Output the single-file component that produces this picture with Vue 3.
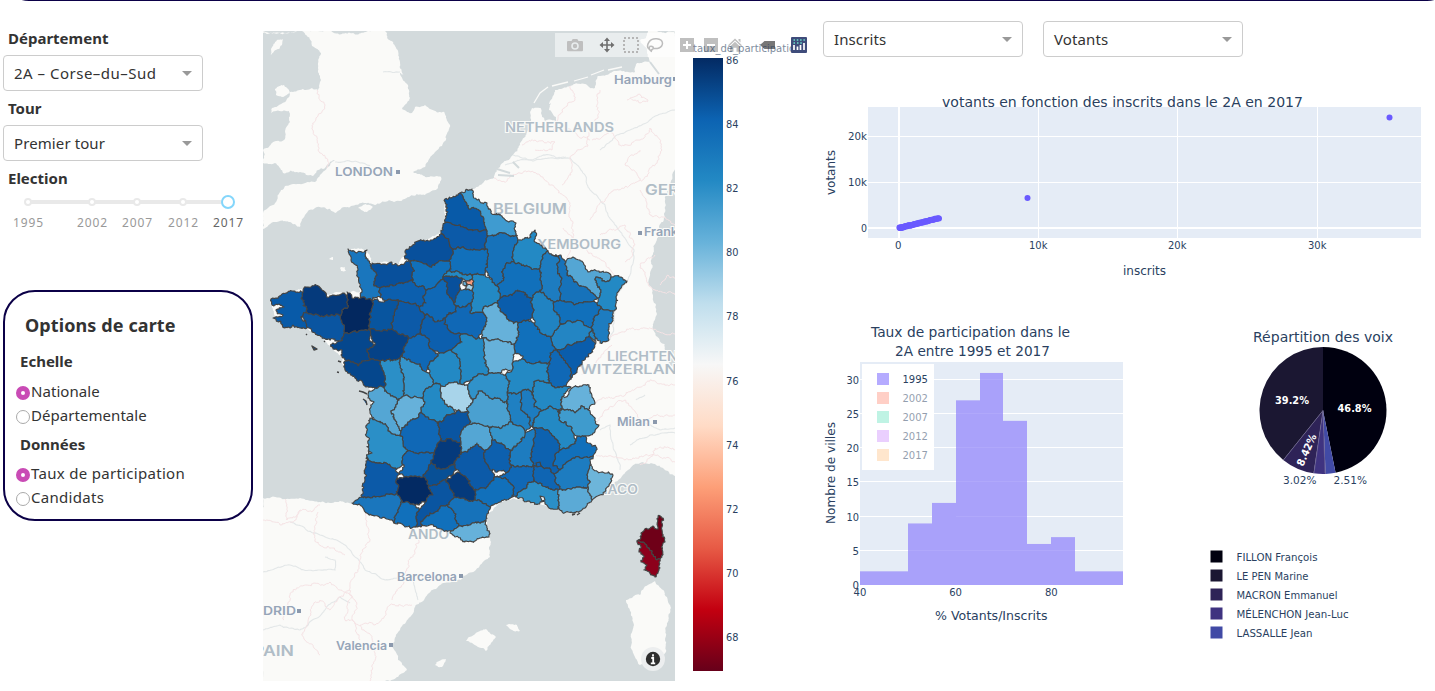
<script setup>
import { ref } from 'vue'

const years = [
  { label: '1995', x: 28 },
  { label: '2002', x: 92 },
  { label: '2007', x: 137 },
  { label: '2012', x: 183 },
  { label: '2017', x: 228 }
]
const scale = ref('Nationale')
const data = ref('Taux de participation')

// Département outlines: fill colour, then x,y pairs in map space
const departments = [
  ['#085aa8', '445,199 460,193 468,207 477,209 484,219 485,226 487,231 478,231 467,229 460,225 450,223 445,222'],
  ['#3f9bd0', '460,193 472,189 474,198 481,203 487,203 492,214 502,216 507,221 516,223 516,235 504,233 488,236 487,231 485,226 484,219 477,209 468,207'],
  ['#0c5aa8', '445,222 450,223 460,225 467,229 478,231 487,231 488,236 486,249 470,250 452,249 449,242 441,234 443,230'],
  ['#1672ba', '488,236 504,233 516,235 518,240 514,249 514,262 508,263 503,270 502,281 497,286 492,279 485,270 488,256 486,249'],
  ['#2389c4', '518,240 524,239 531,237 532,232 535,230 536,236 535,242 540,245 548,251 543,255 541,264 539,269 527,266 514,262 514,249'],
  ['#1d7cc0', '548,251 552,255 559,258 558,270 562,278 560,292 560,300 553,303 547,298 541,290 540,280 539,269 541,264 543,255'],
  ['#1672ba', '552,255 561,255 566,261 567,275 578,284 588,289 598,298 590,302 583,303 571,302 560,300 560,292 562,278 558,270 559,258'],
  ['#54a6d4', '566,261 573,257 580,260 588,272 597,271 606,272 611,277 610,280 602,281 596,277 597,285 601,290 598,298 588,289 578,284 567,275'],
  ['#2389c4', '611,277 620,277 627,281 617,295 613,311 608,310 601,307 597,303 598,298 601,290 597,285 596,277 602,281 610,280'],
  ['#1d7cc0', '601,307 608,310 613,311 612,322 609,332 609,340 600,343 595,337 591,328 594,320'],
  ['#1170bb', '560,300 571,302 583,303 590,302 597,303 601,307 594,320 591,328 583,322 570,321 562,324 559,316 553,303'],
  ['#2083c2', '591,328 595,337 596,342 588,337'],
  ['#2385c3', '562,324 570,321 583,322 591,328 588,337 579,342 565,348 557,350 552,345 552,336 556,330'],
  ['#0a5dac', '588,337 596,343 592,350 582,361 576,373 571,379 569,367 560,355 557,350 565,348 579,342'],
  ['#1068b6', '550,353 557,350 560,355 569,367 571,379 566,386 555,388 549,383 548,373 549,362'],
  ['#2389c4', '535,381 549,383 555,388 566,386 571,387 566,392 562,397 560,413 550,406 541,411 534,407 533,395'],
  ['#66b1da', '562,397 568,395 572,388 580,386 589,385 590,393 595,403 588,410 581,406 575,413 563,409 560,413'],
  ['#3f9bcd', '560,413 563,409 575,413 581,406 588,410 595,418 599,425 594,433 583,436 574,435 572,428 566,422 559,420'],
  ['#2389c4', '534,420 541,411 550,406 560,413 559,420 566,422 572,428 574,435 575,442 569,448 560,450 557,440 549,431 540,428 534,428'],
  ['#1170bb', '560,450 569,448 575,442 577,436 586,436 588,443 596,447 593,456 580,458 567,462 560,470 553,466 555,457'],
  ['#0d62b0', '534,428 540,428 549,431 557,440 560,450 555,457 553,466 560,470 554,474 546,468 533,466 531,455 533,440'],
  ['#1d7cc0', '534,428 533,440 531,455 533,466 520,467 511,465 510,453 517,445 522,438 526,432'],
  ['#1f80c2', '507,392 520,392 521,410 530,418 531,426 525,432 519,426 511,422 508,411'],
  ['#1d7cc0', '520,392 528,389 533,395 534,407 541,411 534,420 534,428 530,426 530,418 521,410'],
  ['#2389c4', '513,362 523,359 530,363 540,361 549,362 548,373 549,383 535,381 533,395 528,389 520,392 507,392 510,381 505,375 512,370'],
  ['#1170bb', '518,323 527,320 535,325 541,333 552,336 552,345 557,350 550,353 549,362 540,361 530,363 523,359 515,353 514,344 518,333'],
  ['#2083c2', '531,298 541,290 547,298 553,303 559,316 562,324 556,330 552,336 541,333 535,325 533,318 534,310'],
  ['#0a5dac', '497,303 500,298 508,296 518,291 525,295 531,298 534,310 533,318 527,320 518,323 509,321 503,313'],
  ['#1170bb', '514,262 527,266 539,269 540,280 541,290 531,298 525,295 518,291 508,296 500,298 497,286 502,281 503,270 508,263'],
  ['#2389c4', '472,276 485,274 492,279 497,286 500,298 497,303 492,305 485,306 484,314 470,313 471,304 472,290'],
  ['#1170bb', '452,249 470,250 486,249 488,256 485,270 485,274 472,276 462,273 449,271 449,261 452,255'],
  ['#08509c', '405,259 405,251 415,244 431,240 441,234 449,242 452,255 449,261 439,261 430,267 420,262 411,261'],
  ['#1170bb', '411,261 420,262 430,267 439,261 449,261 449,271 443,279 437,284 426,290 415,284 412,275'],
  ['#08509c', '372,263 383,264 398,266 411,261 412,275 413,280 404,283 392,285 380,288 374,286 377,275 371,268'],
  ['#1a76bd', '348,249 355,252 367,250 365,256 371,265 377,275 374,286 380,288 380,297 368,299 361,298 362,292 359,283 358,270 351,260'],
  ['#0c5fae', '380,288 392,285 404,283 413,280 415,284 426,290 426,303 419,307 411,304 404,302 397,300 385,301 380,297'],
  ['#0f68b6', '426,290 437,284 443,279 447,292 454,303 456,312 445,318 435,322 427,314 419,307 426,303'],
  ['#08509c', '443,277 452,276 462,278 460,288 454,303 447,292'],
  ['#2389c4', '449,271 462,273 472,276 470,281 462,278 452,276 443,277'],
  ['#1573bb', '460,289 466,288 472,290 471,304 464,307 456,306 454,303'],
  ['#f79b7c', '466,281 472,279 473,285 467,285'],
  ['#a8d4ea', '465,286 473,286 472,290 466,290'],
  ['#1068b6', '456,306 464,307 471,304 470,313 484,314 486,322 482,332 478,338 468,335 461,334 450,331 444,324 445,318 456,312'],
  ['#66b1da', '484,314 485,306 497,303 503,313 509,321 518,323 518,333 514,344 500,340 489,341 482,338 482,332 486,322'],
  ['#66b1da', '482,338 489,341 500,340 514,344 515,353 513,362 512,370 500,373 489,373 485,360 484,348'],
  ['#0c5fae', '427,314 435,322 445,318 444,324 450,331 461,334 462,342 451,350 440,353 431,349 429,339 421,334 421,327'],
  ['#0c5aa8', '404,302 411,304 419,307 427,314 421,327 421,334 408,337 398,334 392,329 393,316 397,308 397,300'],
  ['#08559f', '372,300 385,301 397,300 397,308 393,316 392,329 380,331 369,329 370,318 372,308'],
  ['#03285f', '347,292 350,293 352,298 361,298 368,299 372,300 372,308 370,318 369,329 359,331 345,333 344,325 341,315 348,307 347,298'],
  ['#053a7c', '303,292 306,287 316,285 322,290 329,297 338,295 344,293 348,300 348,307 341,315 330,316 318,315 306,313 304,303'],
  ['#085aa8', '271,299 282,294 292,291 303,292 304,303 306,313 301,317 307,323 307,328 300,328 293,325 285,328 281,322 273,318 283,315 276,310 284,307 272,305'],
  ['#0a55a1', '301,317 306,313 318,315 330,316 341,315 344,325 345,333 341,341 333,339 322,337 315,333 307,327'],
  ['#05478d', '345,333 359,331 369,329 371,335 370,341 375,345 367,349 370,360 361,363 358,366 350,361 341,355 342,350 333,349 333,343 341,341'],
  ['#054287', '369,329 380,331 392,329 398,334 408,337 405,346 401,356 390,360 380,361 370,360 367,349 375,345 371,335'],
  ['#1068b6', '408,337 421,334 429,339 431,349 438,354 434,360 428,366 426,372 420,364 410,360 401,356 405,346'],
  ['#2389c4', '438,354 451,350 459,358 461,370 460,384 446,385 434,384 430,375 428,366 434,360'],
  ['#2389c4', '451,350 462,342 461,334 468,335 478,338 482,338 484,348 485,360 489,373 478,374 473,379 464,384 460,384 461,370 459,358'],
  ['#3595cb', '401,356 410,360 420,364 426,372 434,384 425,390 422,398 412,398 404,396 404,385 401,372'],
  ['#2b8fc7', '380,361 390,360 401,356 401,372 404,385 404,396 399,399 390,394 384,388 385,380 382,368'],
  ['#05478d', '344,362 350,361 358,366 361,363 370,360 380,361 382,368 385,380 384,388 375,388 366,387 355,378 345,370'],
  ['#54a6d4', '369,391 375,388 384,388 390,394 399,399 396,407 391,411 394,419 401,431 401,436 391,433 383,424 372,417 370,411 374,402 368,398'],
  ['#66b1da', '399,399 404,396 412,398 422,398 425,402 420,413 408,422 401,431 394,419 391,411 396,407'],
  ['#2389c4', '425,390 434,384 441,386 443,400 452,407 455,414 437,422 427,417 420,413 425,402 422,398'],
  ['#a8d4ea', '441,386 446,385 460,384 467,385 473,400 469,406 468,411 457,411 450,406 443,400'],
  ['#0a55a1', '437,422 455,414 457,411 468,411 470,424 462,430 461,442 452,440 440,441 439,430'],
  ['#1068b6', '401,436 401,431 408,422 420,413 427,417 437,422 439,430 440,441 434,453 423,453 408,451 403,444'],
  ['#2b8fc7', '370,418 383,424 391,433 401,436 403,444 408,451 403,456 404,465 396,469 386,463 374,462 367,457 369,440'],
  ['#0c5aa8', '367,457 374,462 386,463 396,469 400,474 396,481 397,494 385,496 362,497 365,480'],
  ['#1068b6', '408,451 423,453 434,453 431,463 427,471 424,477 415,476 405,477 400,474 404,465 403,456'],
  ['#053a7c', '440,441 452,440 461,442 461,454 455,461 445,469 437,469 431,463 434,453'],
  ['#085096', '427,471 431,463 437,469 445,469 455,461 456,470 446,480 438,484 429,486 424,477'],
  ['#032a63', '396,481 405,477 415,476 424,477 429,486 433,495 425,502 412,504 402,501 397,494'],
  ['#0c5aa8', '455,461 461,454 467,452 477,443 485,451 488,465 495,477 483,488 474,490 467,479 460,473 456,470'],
  ['#54a6d4', '461,442 462,430 470,424 480,424 490,427 492,440 485,451 477,443 467,452 461,454'],
  ['#4aa0d0', '473,400 478,391 490,398 503,402 507,402 508,411 511,422 505,426 490,427 480,424 470,424 468,411 469,406'],
  ['#3092ca', '467,385 473,379 478,374 489,373 500,373 505,375 510,381 507,392 507,402 490,398 478,391 473,400'],
  ['#3595cb', '490,427 505,426 511,422 519,426 525,432 519,443 510,450 502,444 492,440'],
  ['#0d60ae', '485,451 492,440 502,444 510,450 511,465 506,473 495,472 488,465'],
  ['#1068b6', '495,477 506,473 511,465 520,467 533,466 534,478 527,485 516,497 512,497 514,488 508,481'],
  ['#1170bb', '483,488 495,477 508,481 514,488 512,497 500,502 490,507 482,503 475,500 474,490'],
  ['#053a7c', '446,480 456,473 460,473 467,479 474,490 475,500 465,500 455,497 450,489'],
  ['#0a55a1', '429,486 438,484 446,480 450,489 455,497 447,505 440,508 430,513 425,518 421,527 415,527 417,520 419,510 425,502 433,495'],
  ['#1170bb', '402,501 412,504 419,510 417,520 415,527 405,527 394,523 398,512'],
  ['#1a76bd', '352,503 362,497 385,496 397,494 402,501 398,512 394,523 380,518 366,513 363,508'],
  ['#1170bb', '421,524 425,518 430,513 440,508 447,505 456,514 458,527 452,531 440,529 430,525'],
  ['#1672ba', '447,505 455,497 465,500 475,500 482,503 490,507 487,514 486,521 478,522 470,525 458,527 456,514'],
  ['#66b1da', '450,533 458,527 470,525 478,522 486,521 487,530 489,537 480,538 473,542 462,540 455,537'],
  ['#0f65b3', '533,466 546,468 554,474 556,483 560,489 548,487 540,483 534,478'],
  ['#2b8fc7', '516,497 527,485 534,480 548,487 560,489 558,500 559,509 549,508 545,502 538,504 528,501'],
  ['#1d7cc0', '554,474 560,470 567,462 580,458 593,456 590,465 587,475 588,487 575,488 560,489 556,483'],
  ['#6db5da', '590,465 598,472 613,475 609,486 600,495 592,500 588,487 587,475'],
  ['#5baad6', '560,489 575,488 588,487 592,500 586,507 575,513 563,513 558,507 558,500'],
  ['#6f0018', '658,516 663,518 662,530 665,542 662,557 657,560 652,551 645,544 637,541 641,533 653,526 658,529'],
  ['#8c001b', '637,541 645,544 652,551 657,560 660,559 659,570 655,577 644,570 647,565 641,562 644,557 639,552 641,548']
]

const parse = (s) => s.split(' ').map((p) => p.split(',').map(Number))
const noise = (n) => {
  const v = Math.sin(n) * 43758.5453
  return v - Math.floor(v) - 0.5
}
// Subdivides an edge; the result is the same whichever way the edge is walked
function roughen(a, b, amp, grain = 0) {
  const len = Math.hypot(b[0] - a[0], b[1] - a[1])
  if (len < 2.2) return []
  const key = (a[0] + b[0]) * 12.9898 + (a[1] + b[1]) * 78.233
  const reach = len * amp + grain
  const m = [
    (a[0] + b[0]) / 2 + noise(key) * reach,
    (a[1] + b[1]) / 2 + noise(key + 17) * reach
  ]
  return [...roughen(a, m, amp, grain), m, ...roughen(m, b, amp, grain)]
}
function toPath(points, amp, grain) {
  const out = []
  points.forEach((p, i) => {
    out.push(p, ...roughen(p, points[(i + 1) % points.length], amp, grain))
  })
  return 'M' + out.map((p) => p[0].toFixed(1) + ' ' + p[1].toFixed(1)).join('L') + 'Z'
}
// Neighbouring outlines share every vertex that touches a common edge
const rings = departments.map((d) => parse(d[1]))
const vertices = rings.flat()
function weld(ring) {
  const out = []
  ring.forEach((a, i) => {
    const b = ring[(i + 1) % ring.length]
    const dx = b[0] - a[0]
    const dy = b[1] - a[1]
    const len = Math.hypot(dx, dy)
    const hits = new Map()
    vertices.forEach((v) => {
      const t = ((v[0] - a[0]) * dx + (v[1] - a[1]) * dy) / (len * len)
      const dist = Math.abs((v[0] - a[0]) * dy - (v[1] - a[1]) * dx) / len
      const own = ring.some((r) => r[0] === v[0] && r[1] === v[1])
      if (t > 0.12 && t < 0.88 && dist < 1.7 && !own) hits.set(v.join(), [t, v])
    })
    out.push(a, ...[...hits.values()].sort((p, q) => p[0] - q[0]).map((h) => h[1]))
  })
  return out
}
const shapes = departments.map((d, i) => ({ fill: d[0], d: toPath(weld(rings[i]), 0.18, 1.5) }))

const lands = [
  '302,31 312,46 321,53 318,68 321,80 318,90 312,88 300,90 290,92 286,101 272,108 271,113 289,111 290,122 285,131 284,140 263,150 263,163 275,163 283,173 300,172 313,176 318,170 328,164 335,160 320,175 315,182 300,184 285,186 277,200 263,213 263,229 275,222 290,222 300,227 305,215 315,208 330,209 335,213 345,207 360,203 375,205 400,201 425,195 438,188 441,177 425,177 413,172 425,167 435,152 446,140 450,125 444,112 425,105 415,107 412,113 402,108 410,98 408,85 400,73 404,75 400,62 395,46 385,31',
  '648,31 646,38 640,40 647,50 650,62 637,63 635,72 625,72 610,73 598,76 595,88 585,84 570,86 555,90 548,105 532,108 528,130 520,145 513,155 500,167 494,178 480,185 472,189 445,199 443,230 405,255 398,265 372,263 367,251 348,249 358,270 360,292 344,293 303,289 271,299 276,318 320,336 345,370 370,390 370,418 367,457 362,497 352,503 340,501 330,503 300,498 285,499 263,498 263,681 390,681 407,670 398,660 392,645 400,630 415,607 424,600 440,585 460,580 480,565 490,557 491,542 487,528 487,514 505,500 525,499 550,507 575,512 592,499 605,489 615,482 628,470 640,463 655,464 665,470 675,476 675,31',
  '626,600 640,595 655,581 663,590 671,608 667,625 666,650 660,665 640,665 634,655 634,625 631,612',
  '466,641 486,629 496,637 486,651 478,647',
  '506,625 517,625 520,631 510,629',
  '435,665 446,659 442,667',
  '271,49 275,42 283,39 280,47 271,55',
  '275,89 284,85 290,92 282,97 276,95',
  '340,268 345,267 346,271 341,271',
  '329,259 333,257 333,260',
  '358,208 366,204 373,207 367,212',
  '263,31 297,31 290,33 263,33'
].map((s) => toPath(parse(s), 0.22, 0.5))

const waters = ['541,105 551,103 549,110 556,117 556,121 545,121 541,113'].map((s) => toPath(parse(s), 0.25, 0.3))

const line = (s, amp = 0.2, grain = 1.3) => {
  const pts = parse(s)
  const out = []
  pts.forEach((p, i) => {
    out.push(p)
    if (i < pts.length - 1) out.push(...roughen(p, pts[i + 1], amp, grain))
  })
  return 'M' + out.map((p) => p[0].toFixed(1) + ' ' + p[1].toFixed(1)).join('L')
}
const borders = [
  '317,90 325,105 313,130 318,150 328,160 327,168',
  '494,178 505,182 520,173 540,175 555,188 570,203 573,222',
  '600,90 598,118 588,145 572,155 571,175 562,185',
  '570,86 575,100 562,110 553,130 565,125 580,138 590,140',
  '592,140 610,132 620,145 640,140 650,128 660,140 655,165 630,185 605,200 590,220',
  '627,100 640,95 648,100 640,103 630,98',
  '522,145 535,140 555,142 552,150 535,150',
  '573,222 575,240 588,252 605,262 627,281',
  '563,228 572,240 566,258', '600,235 625,225 635,245 625,262', '640,190 650,215 675,225',
  '609,340 625,332 645,328 675,334', '612,345 600,358 582,375', '595,403 625,395 650,380 675,385',
  '590,430 605,410 625,400 640,420 675,415', '596,455 625,460 645,455 675,462', '640,465 655,448 675,450',
  '285,499 287,520 300,510 312,512 320,505', '318,512 315,540 335,550 345,555',
  '366,513 370,540 362,550 350,585 345,620 375,625 390,605 412,605',
  '421,527 415,550 405,575 392,600', '284,620 290,595 305,585 330,582 355,600 360,640',
  '360,625 375,650 370,681', '263,520 280,525 295,520 300,510', '350,590 330,610 320,600 305,640 320,655',
  '660,285 668,275 675,278', '640,180 625,165 640,150', '655,255 640,268 655,290 675,295'
].map((s) => line(s))
const rivers = [
  '513,155 530,160 550,155 570,158 585,175 590,190 605,205 615,225 625,238 634,250 627,281',
  '505,165 520,160 550,158 566,157', '263,572 290,565 320,570 335,570 335,560 325,557',
  '290,522 320,535 345,545 365,570 385,580 410,575 418,600', '263,630 280,625 300,630 325,610 340,597 350,603',
  '600,150 630,130 675,110', '627,281 615,300 610,340', '640,420 660,430 675,428', '630,445 650,435 675,433',
  '335,162 360,163 370,166', '383,72 400,72', '636,400 645,395', '620,470 610,425 600,430'
].map((s) => line(s, 0.16, 0.3))

// Map labels: text, x, baseline, width, size, colour
const places = [
  ['LONDON', 335, 176, 58, 12, '#96a5b8'],
  ['Hamburg', 614, 84, 58, 12, '#96a5b8'],
  ['NETHERLANDS', 505, 132, 109, 12.5, '#b0bdc7'],
  ['BELGIUM', 493, 214, 74, 14, '#b0bdc7'],
  ['XEMBOURG', 537, 249, 84, 12.5, '#b0bdc7'],
  ['GERM', 645, 195, 50, 14, '#b0bdc7'],
  ['Frank', 644, 236, 34, 12, '#96a5b8'],
  ['LIECHTEN', 607, 361, 71, 12.5, '#b0bdc7'],
  ['WITZERLAN', 580, 374, 97, 12.5, '#b0bdc7'],
  ['Milan', 617, 426, 33, 12, '#96a5b8'],
  ['NACO', 597, 494, 41, 12.5, '#b0bdc7'],
  ['ANDO', 408, 539, 41, 12.5, '#b0bdc7'],
  ['Barcelona', 397, 581, 60, 12, '#96a5b8'],
  ['DRID', 263, 615, 33, 12, '#96a5b8'],
  ['PAIN', 253, 656, 41, 14, '#b0bdc7'],
  ['Valencia', 336, 650, 51, 12, '#96a5b8']
]
const dots = [[398, 172], [675, 79], [640, 233], [655, 422], [461, 576], [299, 611], [391, 645]]

const barTicks = [86, 84, 82, 80, 78, 76, 74, 72, 70, 68].map((v, i) => ({ v, y: 59.5 + i * 64.2 }))

const villages = Array.from({ length: 60 }, (_, i) => {
  const t = Math.pow(i / 59, 1.25)
  return [899.5 + t * 39.5, 228 - t * 9.8 + noise(i * 3.1) * 0.8]
})

const bins = [2, 2, 9, 12, 27, 31, 24, 6, 7, 2, 2]
const legend = [
  ['1995', '#b5abff', 1], ['2002', '#ffcfc6', 0.5], ['2007', '#bff3e4', 0.5], ['2012', '#eacffe', 0.5], ['2017', '#ffe6cd', 0.5]
]
const barEdges = bins.map((_, i) => Math.round(860 + i * 23.91))

const votes = [
  ['FILLON François', 46.8, '#00000f', 81],
  ['LASSALLE Jean', 2.51, '#414aa5', 76],
  ['MÉLENCHON Jean-Luc', 3.02, '#3f3380', 112],
  ['MACRON Emmanuel', 8.42, '#2e2357', 101],
  ['LE PEN Marine', 39.2, '#1b1732', 72]
]
const total = votes.reduce((s, v) => s + v[1], 0)
let turn = 0
const slices = votes.map(([, share, fill]) => {
  const a = (turn / total) * Math.PI * 2
  turn += share
  const b = (turn / total) * Math.PI * 2
  const pt = (t) => `${(1323 + 63.5 * Math.sin(t)).toFixed(2)} ${(410.5 - 63.5 * Math.cos(t)).toFixed(2)}`
  return { fill, d: `M1323 410.5L${pt(a)}A63.5 63.5 0 0 1 ${pt(b)}Z` }
})
const ranking = [votes[0], votes[4], votes[3], votes[2], votes[1]]
</script>

<template>
  <div class="page">
    <div class="header-edge"></div>
    <aside class="sidebar">
      <div class="field">
        <h4>Département</h4>
        <div class="select"><span class="dept">2A – Corse–du–Sud</span><i class="arrow"></i></div>
      </div>
      <div class="field">
        <h4>Tour</h4>
        <div class="select"><span>Premier tour</span><i class="arrow"></i></div>
      </div>
      <div class="field">
        <h4>Election</h4>
        <svg class="slider" width="260" height="46" viewBox="0 192 260 46">
          <rect x="28" y="200" width="200" height="4" rx="2" fill="#e9e9e9" />
          <circle v-for="y in years.slice(0, 4)" :key="y.x" :cx="y.x" cy="202" r="3" fill="#fff" stroke="#e9e9e9" stroke-width="2" />
          <circle cx="228" cy="202" r="6" fill="#fff" stroke="#84d6fb" stroke-width="2" />
          <text v-for="y in years" :key="y.label" :x="y.x" y="227" text-anchor="middle" textLength="30"
            :class="['year', { on: y.label === '2017' }]">{{ y.label }}</text>
        </svg>
      </div>
      <section class="options">
        <h3>Options de carte</h3>
        <h4>Echelle</h4>
        <label v-for="o in ['Nationale', 'Départementale']" :key="o" class="tight" @click="scale = o">
          <i :class="['radio', { on: scale === o }]"></i>{{ o }}
        </label>
        <h4 class="second">Données</h4>
        <label v-for="o in ['Taux de participation', 'Candidats']" :key="o" @click="data = o">
          <i :class="['radio', { on: data === o }]"></i>{{ o }}
        </label>
      </section>
    </aside>

    <svg class="map" width="560" height="691" viewBox="263 0 560 691">
      <defs>
        <clipPath id="mapframe"><rect x="263" y="31" width="412" height="650" /></clipPath>
        <clipPath id="bartitle"><rect x="690" y="36" width="101" height="20" /></clipPath>
        <linearGradient id="rdbu" x1="0" y1="0" x2="0" y2="1">
          <stop offset="0" stop-color="#032a63" />
          <stop offset="0.1" stop-color="#0c63b2" />
          <stop offset="0.2" stop-color="#2389c4" />
          <stop offset="0.3" stop-color="#67b2da" />
          <stop offset="0.4" stop-color="#bfdeed" />
          <stop offset="0.5" stop-color="#f7f7f7" />
          <stop offset="0.6" stop-color="#ffdbc6" />
          <stop offset="0.7" stop-color="#fd9f78" />
          <stop offset="0.8" stop-color="#e75a45" />
          <stop offset="0.9" stop-color="#c30010" />
          <stop offset="1" stop-color="#67001a" />
        </linearGradient>
      </defs>
      <g clip-path="url(#mapframe)">
        <rect x="263" y="31" width="412" height="650" fill="#d3dadc" />
        <path v-for="(d, i) in lands" :key="'l' + i" :d="d" fill="#fafaf8" />
        <path v-for="(d, i) in waters" :key="'w' + i" :d="d" fill="#d3dadc" />
        <g fill="none">
          <path v-for="(d, i) in rivers" :key="'r' + i" :d="d" stroke="#e3e7e8" stroke-width="1.1" />
          <path v-for="(d, i) in borders" :key="'b' + i" :d="d" stroke="#f6e3e5" stroke-width="1" />
          <path d="M534 103 540 93 548 87M552 86 568 82M574 81 588 77M591 75 604 70M608 70 622 67" stroke="#fafaf8" stroke-width="1.3" />
          <path d="M497 169 510 173M498 175 514 176M513 162 519 168M659 74 650 62" stroke="#d3dadc" stroke-width="2" />
        </g>
        <g class="places">
          <text v-for="p in places" :key="p[0]" :x="p[1]" :y="p[2]" :textLength="p[3]" lengthAdjust="spacingAndGlyphs"
            :font-size="p[4]" :fill="p[5]">{{ p[0] }}</text>
          <rect v-for="d in dots" :key="d[0]" :x="d[0] - 2" :y="d[1] - 2" width="4" height="4" fill="#8b99ad" />
        </g>
        <g stroke="#444" stroke-width="1.15" stroke-linejoin="round">
          <path v-for="(s, i) in shapes" :key="'s' + i" :d="s.d" :fill="s.fill" />
          <path d="M463 281l3 1 1 4-4-1z" fill="#67b2da" />
          <path d="M536 463l4-1 1 4-4 1z" fill="#0d62b0" />
          <path d="M540 496l4 1 1 3-3 1z M369 451l3 2-3 1z" fill="#e8eff2" />
          <path d="M359 391l4 1 4 2M363 399l3 2 1 4M338 361l3 1M337 372l2 .5M312 346l5 3-3 1zM306 334l1 1M324 341l1 1M572 515l3-1M577 515l3-2" fill="#085096" stroke-width="1.4" />
        </g>
        <circle cx="653" cy="659" r="12" fill="#eceeef" />
        <circle cx="653" cy="659" r="7.2" fill="#2e2e2e" />
        <path d="M653 654.2v2.2M651.3 658h1.9v5.3M650.8 663.4h4.4" stroke="#fff" stroke-width="1.8" fill="none" />
      </g>

      <rect x="693" y="58" width="30" height="613" fill="url(#rdbu)" />
      <g class="plot" font-size="10.5">
        <text v-for="t in barTicks" :key="t.v" x="726" :y="t.y + 4" textLength="12.5" lengthAdjust="spacingAndGlyphs">{{ t.v }}</text>
      </g>

      <rect x="555" y="33" width="256" height="24" fill="#fff" fill-opacity=".5" />
      <g fill="#bfbfbf">
        <path fill-rule="evenodd" d="M568 41h3.5l1.2-2h4.6l1.2 2H582q1 0 1 1v8q0 1.200-1 1.200h-14q-1 0-1-1v-8.200q0-1 1-1zM575 42.200a3.800 3.800 0 1 0 0 7.600a3.800 3.800 0 1 0 0-7.600zM575 43.800a2.200 2.200 0 1 1 0 4.400a2.200 2.200 0 1 1 0-4.400z" />
        <path fill-rule="evenodd" d="M680 38h14v14h-14zM686 41v3h-3v2h3v3h2v-3h3v-2h-3v-3z" />
        <path fill-rule="evenodd" d="M704 38h14v14h-14zM707 44v2h8v-2z" />
        <path d="M735 38.500l7 6.700-1 1-6-5.600-6 5.600-1-1zM730 46.500l5-4.700 5 4.700v5.200h-3.500v-4h-3v4H730zM738.500 39h2v3.500l-2-2z" />
      </g>
      <path d="M624 38h14v14h-14z" fill="none" stroke="#b5b5b5" stroke-width="2" stroke-dasharray="2 2" />
      <path d="M649 49c-2-1-2-4 0-7 3-5 13-4 13.500 1 0 5-6 6.500-10 5M649.500 46.500c3-1 5 1 3 3s-4 0-3-3M652 49l-1 3" fill="none" stroke="#bdbdbd" stroke-width="1.500" />
      <path d="M607 37.500l3 3.500h-2.200v3.200h3.200V42l3.500 3-3.500 3v-2.200h-3.200V49h2.200l-3 3.500-3-3.500h2.200v-3.200H603V48l-3.500-3 3.500-3v2.200h3.200V41H604z" fill="#6f6f6f" />
      <path d="M760 45l4.500-4H775v8h-10.500z" fill="#777" />
      <g clip-path="url(#bartitle)" opacity=".6">
        <text class="plot" x="693" y="52" font-size="10.800" textLength="108.500" lengthAdjust="spacingAndGlyphs">taux_de_participation</text>
      </g>
      <rect x="791" y="37" width="16" height="16" rx="1" fill="#3f4c7b" />
      <path d="M794 50v-5M797.500 50v-3.500M800.500 50v-5M804 50v-7" stroke="#fff" stroke-width="1.700" />
      <path d="M793.500 40h11.500M793.500 43h2M797 43h5" stroke="#6be0cd" stroke-width="1.500" stroke-dasharray="1.500 1.800" />
    </svg>

    <main class="charts">
      <div class="selectors">
        <div class="select"><span>Inscrits</span><i class="arrow"></i></div>
        <div class="select"><span>Votants</span><i class="arrow"></i></div>
      </div>
      <svg class="plots" width="612" height="634" viewBox="823 57 612 634">
        <g class="plot">
          <text x="942" y="107" font-size="14" textLength="361" lengthAdjust="spacingAndGlyphs">votants en fonction des inscrits dans le 2A en 2017</text>
          <rect x="868" y="107" width="553" height="131" fill="#e5ecf6" />
          <path d="M1038.500 107v131M1177.500 107v131M1317.500 107v131M868 136.500h553M868 182.500h553" stroke="#fff" />
          <path d="M899 107v131M868 228h553" stroke="#fff" stroke-width="2" />
          <g fill="#6a5aff">
            <circle v-for="(p, i) in villages" :key="i" :cx="p[0]" :cy="p[1]" r="3" />
            <circle cx="1027.500" cy="198" r="3" /><circle cx="1389.500" cy="117.500" r="3" />
          </g>
          <g font-size="10.500">
            <text x="848" y="140" textLength="19" lengthAdjust="spacingAndGlyphs">20k</text>
            <text x="848" y="186" textLength="19" lengthAdjust="spacingAndGlyphs">10k</text>
            <text x="861" y="232" textLength="6" lengthAdjust="spacingAndGlyphs">0</text>
            <text x="895" y="249" textLength="6.500" lengthAdjust="spacingAndGlyphs">0</text>
            <text x="1029" y="249" textLength="18.500" lengthAdjust="spacingAndGlyphs">10k</text>
            <text x="1168" y="249" textLength="18.500" lengthAdjust="spacingAndGlyphs">20k</text>
            <text x="1308" y="249" textLength="18.500" lengthAdjust="spacingAndGlyphs">30k</text>
          </g>
          <text x="1123" y="275" font-size="12" textLength="43" lengthAdjust="spacingAndGlyphs">inscrits</text>
          <text transform="translate(835 195) rotate(-90)" font-size="12" textLength="45" lengthAdjust="spacingAndGlyphs">votants</text>
        </g>

        <g class="plot">
          <text x="871" y="337" font-size="14" textLength="199" lengthAdjust="spacingAndGlyphs">Taux de participation dans le</text>
          <text x="895" y="356" font-size="14" textLength="155" lengthAdjust="spacingAndGlyphs">2A entre 1995 et 2017</text>
          <rect x="860" y="362" width="263" height="223" fill="#e5ecf6" />
          <path v-for="k in 6" :key="k" :d="`M860 ${Math.round(585 - k * 34.2) - 0.5}h263`" stroke="#fff" />
          <rect v-for="(n, i) in bins" :key="'h' + i" :x="barEdges[i]" :y="585 - n * 6.84" :width="(barEdges[i + 1] || 1123) - barEdges[i]" :height="n * 6.84" fill="#a9a1fa" />
          <path v-for="k in 6" :key="'g' + k" :d="`M${[0, 908, 956, 956, 956, 956, 980][k]} ${Math.round(585 - k * 34.2) - 0.5}H${[0, 1075, 1027, 1027, 1027, 1003, 1003][k]}`" stroke="#b0a8fb" />
          <rect x="862" y="364" width="72" height="106" fill="#fff" />
          <g v-for="(l, i) in legend" :key="l[0]">
            <rect :x="877" :y="373 + i * 19" width="12" height="12" :fill="l[1]" />
            <text x="902.500" :y="383 + i * 19" font-size="10.500" textLength="25.500" lengthAdjust="spacingAndGlyphs" :opacity="l[2]">{{ l[0] }}</text>
          </g>
          <g font-size="10.500">
            <text v-for="k in 5" :key="'y' + k" x="846.500" :y="Math.round(589 - (k + 1) * 34.2)" textLength="12.500" lengthAdjust="spacingAndGlyphs">{{ (k + 1) * 5 }}</text>
            <text x="852.500" y="555" textLength="6.500" lengthAdjust="spacingAndGlyphs">5</text>
            <text x="852.500" y="589" textLength="6.500" lengthAdjust="spacingAndGlyphs">0</text>
            <text v-for="(t, i) in [40, 60, 80]" :key="'x' + t" :x="853.500 + i * 95.700" y="596" textLength="12.800" lengthAdjust="spacingAndGlyphs">{{ t }}</text>
          </g>
          <text x="935" y="620" font-size="12" textLength="112.500" lengthAdjust="spacingAndGlyphs">% Votants/Inscrits</text>
          <text transform="translate(835 524) rotate(-90)" font-size="12" textLength="102" lengthAdjust="spacingAndGlyphs">Nombre de villes</text>
        </g>

        <g class="plot">
          <text x="1253" y="342" font-size="14" textLength="140" lengthAdjust="spacingAndGlyphs">Répartition des voix</text>
          <path v-for="s in slices" :key="s.d" :d="s.d" :fill="s.fill" />
          <path d="M1323 410.500L1283.500 460M1323 410.500L1314 473M1323 410.500L1325 473" stroke="#77719c" stroke-width=".6" />
          <g font-size="10.500">
            <g font-weight="bold">
              <text x="1275" y="404" textLength="34" lengthAdjust="spacingAndGlyphs" class="white">39.2%</text>
              <text x="1337.500" y="412" textLength="34" lengthAdjust="spacingAndGlyphs" class="white">46.8%</text>
              <text transform="translate(1303 467) rotate(-66)" textLength="34" lengthAdjust="spacingAndGlyphs" class="white">8.42%</text>
            </g>
            <text x="1283" y="484" textLength="33.500" lengthAdjust="spacingAndGlyphs">3.02%</text>
            <text x="1333.500" y="484" textLength="33.500" lengthAdjust="spacingAndGlyphs">2.51%</text>
            <g v-for="(r, i) in ranking" :key="r[0]">
              <rect x="1210.500" :y="550.500 + i * 19" width="12" height="12" :fill="r[2]" />
              <text x="1236.500" :y="561 + i * 19" :textLength="r[3]" lengthAdjust="spacingAndGlyphs">{{ r[0] }}</text>
            </g>
          </g>
        </g>
      </svg>
    </main>
  </div>
</template>

<style>
html,
body {
  background: #fff;
  overflow: hidden;
}
</style>

<style scoped>
.page {
  display: flex;
  position: relative;
  width: 1435px;
  height: 691px;
  overflow: hidden;
  color: #333;
  font-family: 'Noto Sans', 'Open Sans', sans-serif;
}
.header-edge {
  position: absolute;
  top: -59px;
  left: 3px;
  width: 1450px;
  height: 60px;
  box-sizing: border-box;
  border: 2px solid #0b0047;
  border-radius: 26px;
}
.sidebar {
  width: 263px;
  padding-top: 21px;
  box-sizing: border-box;
  flex: none;
}
.field {
  height: 70px;
}
h4 {
  margin: 0;
  padding-left: 8px;
  height: 34px;
  line-height: 34px;
  font-size: 15px;
  font-weight: 700;
  letter-spacing: 0;
}
.select {
  display: flex;
  align-items: center;
  justify-content: space-between;
  width: 200px;
  height: 36px;
  margin-left: 3px;
  padding: 0 10px;
  box-sizing: border-box;
  border: 1px solid #ccc;
  border-radius: 4px;
  font-size: 15px;
  letter-spacing: 0.1px;
}
.select .dept {
  letter-spacing: 0.5px;
}
.arrow {
  border: 5px solid transparent;
  border-top-color: #999;
  border-bottom: 0;
}
.slider {
  display: block;
  margin-top: -3px;
}
.year {
  font-size: 12px;
  fill: #999;
}
.year.on {
  fill: #666;
}
.options {
  width: 250px;
  height: 231px;
  margin: 59px 0 0 3px;
  box-sizing: border-box;
  border: 2px solid #0b0047;
  border-radius: 32px;
  padding-top: 17px;
}
h3 {
  margin: 0;
  padding-left: 20px;
  height: 32px;
  line-height: 32px;
  font-size: 18px;
  font-weight: 700;
  letter-spacing: 0.1px;
}
.options h4 {
  padding-left: 15px;
  height: 37px;
  line-height: 41px;
  margin-bottom: 1px;
}
.options h4.second {
  height: 32px;
  line-height: 34px;
  margin-bottom: 2px;
}
label {
  display: flex;
  align-items: center;
  height: 24px;
  padding-left: 11px;
  font-size: 15px;
  letter-spacing: 0.3px;
}
label.tight {
  letter-spacing: 0.05px;
}
.radio {
  width: 14px;
  height: 14px;
  margin-right: 1px;
  margin-top: 3px;
  box-sizing: border-box;
  border: 1px solid #aaa;
  border-radius: 50%;
}
.radio.on {
  border: 5px solid #c94bb5;
}
.map {
  flex: none;
}
.charts {
  width: 612px;
}
.selectors {
  display: flex;
  gap: 20px;
  padding-top: 21px;
}
.selectors .select {
  margin: 0;
}
.plots {
  display: block;
}
.plot {
  font-family: 'DejaVu Sans', Verdana, sans-serif;
  fill: #2a3f5f;
}
.white {
  fill: #fff;
}
.places {
  font-family: Inter, 'Open Sans', sans-serif;
  font-weight: 600;
  stroke: #fafaf8;
  stroke-width: 2px;
  paint-order: stroke;
}
.places rect {
  stroke: none;
}
</style>
